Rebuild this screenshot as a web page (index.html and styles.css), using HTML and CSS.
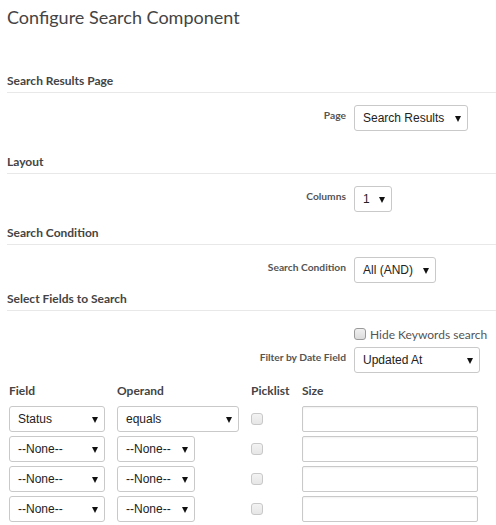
FILE: index.html
```html
<!DOCTYPE html>
<html>
<head>
<meta charset="utf-8">
<link rel="stylesheet" href="styles.css">
</head>
<body>
<div class="page">
  <h1 class="title">Configure Search Component</h1>

  <section class="sec sec-results">
    <h2 class="sec-head">Search Results Page</h2>
    <div class="form-row">
      <span class="lbl">Page</span>
      <div class="sel w-page"><span class="val">Search Results</span><i class="arrow"></i></div>
    </div>
  </section>

  <section class="sec sec-layout">
    <h2 class="sec-head">Layout</h2>
    <div class="form-row">
      <span class="lbl">Columns</span>
      <div class="sel w-cols"><span class="val">1</span><i class="arrow"></i></div>
    </div>
  </section>

  <section class="sec sec-cond">
    <h2 class="sec-head">Search Condition</h2>
    <div class="form-row">
      <span class="lbl">Search Condition</span>
      <div class="sel w-cond"><span class="val">All (AND)</span><i class="arrow"></i></div>
    </div>
  </section>

  <section class="sec sec-fields">
    <h2 class="sec-head">Select Fields to Search</h2>
    <div class="form-row check-row">
      <span></span>
      <label class="chk-label"><span class="chk"></span>Hide Keywords search</label>
    </div>
    <div class="form-row filter-row">
      <span class="lbl">Filter by Date Field</span>
      <div class="sel w-filter"><span class="val">Updated At</span><i class="arrow"></i></div>
    </div>

    <div class="fields">
      <div class="frow fhead">
        <span>Field</span><span>Operand</span><span>Picklist</span><span>Size</span>
      </div>
      <div class="frow">
        <div class="sel w-field"><span class="val">Status</span><i class="arrow"></i></div>
        <div class="sel w-op-wide"><span class="val">equals</span><i class="arrow"></i></div>
        <span class="chk chk-dis"></span>
        <div class="inp"></div>
      </div>
      <div class="frow">
        <div class="sel w-field"><span class="val">--None--</span><i class="arrow"></i></div>
        <div class="sel w-op"><span class="val">--None--</span><i class="arrow"></i></div>
        <span class="chk chk-dis"></span>
        <div class="inp"></div>
      </div>
      <div class="frow">
        <div class="sel w-field"><span class="val">--None--</span><i class="arrow"></i></div>
        <div class="sel w-op"><span class="val">--None--</span><i class="arrow"></i></div>
        <span class="chk chk-dis"></span>
        <div class="inp"></div>
      </div>
      <div class="frow">
        <div class="sel w-field"><span class="val">--None--</span><i class="arrow"></i></div>
        <div class="sel w-op"><span class="val">--None--</span><i class="arrow"></i></div>
        <span class="chk chk-dis"></span>
        <div class="inp"></div>
      </div>
    </div>
  </section>
</div>
</body>
</html>
```
FILE: styles.css
```css
* { box-sizing: border-box; }
html, body { margin: 0; padding: 0; background: #fff; }
body { font-family: Lato, "Open Sans", sans-serif; color: #444; }

.page { padding-left: 7px; }

.title {
  margin: 6px 0 0;
  font-size: 18px;
  line-height: 22px;
  font-weight: 400;
  color: #444;
}

.sec-head {
  margin: 0;
  font-size: 12px;
  line-height: 14px;
  font-weight: 700;
  color: #444;
  padding-bottom: 4px;
  border-bottom: 1px solid #e8e8e8;
}

.sec-results { margin-top: 46px; }
.sec-layout { margin-top: 24px; }
.sec-cond { margin-top: 14px; }
.sec-fields { margin-top: 9px; }

.form-row {
  display: grid;
  grid-template-columns: 339px auto;
  column-gap: 8px;
  margin-top: 12px;
  align-items: start;
}

.lbl {
  text-align: right;
  font-size: 10.25px;
  line-height: 12px;
  font-weight: 700;
  color: #555;
  padding-top: 4px;
}

.sel {
  height: 26px;
  border: 1px solid #c9c9c9;
  border-radius: 3px;
  background: #fff;
  display: flex;
  align-items: center;
  justify-content: space-between;
  padding: 0 6px 0 8px;
  font-family: "Liberation Sans", Arial, sans-serif;
  font-size: 12px;
  color: #222;
}
.sel .val { white-space: nowrap; }
.arrow {
  display: block;
  width: 0;
  height: 0;
  border-left: 3px solid transparent;
  border-right: 3px solid transparent;
  border-top: 6px solid #111;
  margin-top: 1px;
}

.w-page { width: 114px; }
.w-cols { width: 38px; }
.w-cond { width: 82px; }
.w-filter { width: 126px; }
.w-field { width: 96px; }
.w-op-wide { width: 122px; }
.w-op { width: 78px; }

.check-row { margin-top: 15px; }
.chk-label {
  display: flex;
  align-items: center;
  height: 16px;
  font-size: 12px;
  color: #555;
  white-space: nowrap;
}
.chk {
  display: inline-block;
  width: 12px;
  height: 12px;
  border: 1px solid #9a9a9a;
  border-radius: 3px;
  background: linear-gradient(#f0f0f0, #dcdcdc);
  margin-right: 4px;
  flex: none;
}
.chk-dis {
  border-color: #c8c8c8;
  background: linear-gradient(#f3f3f3, #e6e6e6);
  margin-right: 0;
}

.filter-row { margin-top: 5px; }

.fields { margin: 11px 0 0 2px; }
.frow {
  display: grid;
  grid-template-columns: 108px 134px 51px 176px;
  align-items: center;
  margin-bottom: 4px;
}
.fhead {
  font-size: 12px;
  line-height: 14px;
  font-weight: 700;
  color: #444;
  margin-bottom: 8px;
}

.inp {
  width: 176px;
  height: 26px;
  border: 1px solid #c9c9c9;
  border-radius: 2px;
  background: #fff;
  box-shadow: inset 0 1px 2px rgba(0,0,0,0.06);
}
```
